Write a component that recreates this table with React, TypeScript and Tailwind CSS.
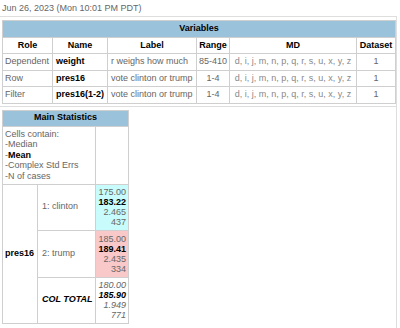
import React from "react";

const vars = [
  { role: "Dependent", name: "weight", label: "r weighs how much", range: "85-410" },
  { role: "Row", name: "pres16", label: "vote clinton or trump", range: "1-4" },
  { role: "Filter", name: "pres16(1-2)", label: "vote clinton or trump", range: "1-4" },
];

const MD = "d, i, j, m, n, p, q, r, s, u, x, y, z";

// - one stats cell (median / mean / se / n)
function Stats({ v, bg, italic }: { v: string[]; bg: string; italic?: boolean }) {
  return (
    <td className={`border border-[#cfcfcf] ${bg} px-[2px] text-right align-middle leading-[10px] text-[#666] ${italic ? "italic" : ""}`}>
      <div>{v[0]}</div>
      <div className="font-bold text-black">{v[1]}</div>
      <div>{v[2]}</div>
      <div>{v[3]}</div>
    </td>
  );
}

export default function App() {
  return (
    <div className="w-[400px] h-[328px] bg-white font-['Liberation_Sans',Arial,sans-serif] text-[9px]">
      <div className="h-[16px] px-[2px] leading-[16px] text-[#666]">Jun 26, 2023 (Mon 10:01 PM PDT)</div>

      <div className="w-[397px] border-t border-r border-b border-[#dedede]">
        {/* Variables */}
        <div className="pt-[3px] pb-[2px] pl-[2px] border-b border-[#dedede]">
          <table className="table-fixed border-collapse w-[393px]">
            <colgroup>
              <col className="w-[50px]" />
              <col className="w-[55px]" />
              <col className="w-[89px]" />
              <col className="w-[33px]" />
              <col className="w-[127px]" />
              <col className="w-[39px]" />
            </colgroup>
            <tbody>
              <tr className="h-[17px]">
                <td colSpan={6} className="border border-[#cfcfcf] bg-[#9bc2db] text-center font-bold text-black">Variables</td>
              </tr>
              <tr className="h-[16px] font-bold text-black">
                <td className="border border-[#cfcfcf] text-center">Role</td>
                <td className="border border-[#cfcfcf] text-center">Name</td>
                <td className="border border-[#cfcfcf] text-center">Label</td>
                <td className="border border-[#cfcfcf] text-center">Range</td>
                <td className="border border-[#cfcfcf] text-center">MD</td>
                <td className="border border-[#cfcfcf] text-center">Dataset</td>
              </tr>
              {vars.map((r) => (
                <tr key={r.role} className="h-[16.5px]">
                  <td className="border border-[#cfcfcf] pl-[2px] text-[#666] whitespace-nowrap">{r.role}</td>
                  <td className="border border-[#cfcfcf] pl-[3px] font-bold text-black whitespace-nowrap">{r.name}</td>
                  <td className="border border-[#cfcfcf] pl-[3px] text-[#666] whitespace-nowrap">{r.label}</td>
                  <td className="border border-[#cfcfcf] text-center text-[#666] whitespace-nowrap">{r.range}</td>
                  <td className="border border-[#cfcfcf] text-center text-[#888] whitespace-nowrap">{MD}</td>
                  <td className="border border-[#cfcfcf] text-center text-[#666]">1</td>
                </tr>
              ))}
            </tbody>
          </table>
        </div>

        {/* Main Statistics */}
        <div className="pt-[3px] pb-[4px] pl-[2px]">
          <table className="table-fixed border-collapse w-[126px]">
            <colgroup>
              <col className="w-[35px]" />
              <col className="w-[58px]" />
              <col className="w-[33px]" />
            </colgroup>
            <tbody>
              <tr className="h-[16px]">
                <td colSpan={3} className="border border-[#cfcfcf] bg-[#9bc2db] text-center font-bold text-black">Main Statistics</td>
              </tr>
              <tr className="h-[58px]">
                <td colSpan={2} className="border border-[#cfcfcf] px-[2px] align-middle leading-[10.4px] text-[#666]">
                  <div>Cells contain:</div>
                  <div>-Median</div>
                  <div>-<span className="font-bold text-black">Mean</span></div>
                  <div>-Complex Std Errs</div>
                  <div>-N of cases</div>
                </td>
                <td className="border border-[#cfcfcf]"></td>
              </tr>
              <tr className="h-[46px]">
                <td rowSpan={3} className="border border-[#cfcfcf] pl-[2px] font-bold text-black">pres16</td>
                <td className="border border-[#cfcfcf] pl-[4px] text-[#666]">1: clinton</td>
                <Stats v={["175.00", "183.22", "2.465", "437"]} bg="bg-[#c8fcfc]" />
              </tr>
              <tr className="h-[47px]">
                <td className="border border-[#cfcfcf] pl-[4px] text-[#666]">2: trump</td>
                <Stats v={["185.00", "189.41", "2.435", "334"]} bg="bg-[#f9c9c9]" />
              </tr>
              <tr className="h-[46px]">
                <td className="border border-[#cfcfcf] pl-[4px] font-bold italic text-black">COL TOTAL</td>
                <Stats v={["180.00", "185.90", "1.949", "771"]} bg="bg-white" italic />
              </tr>
            </tbody>
          </table>
        </div>
      </div>
    </div>
  );
}
